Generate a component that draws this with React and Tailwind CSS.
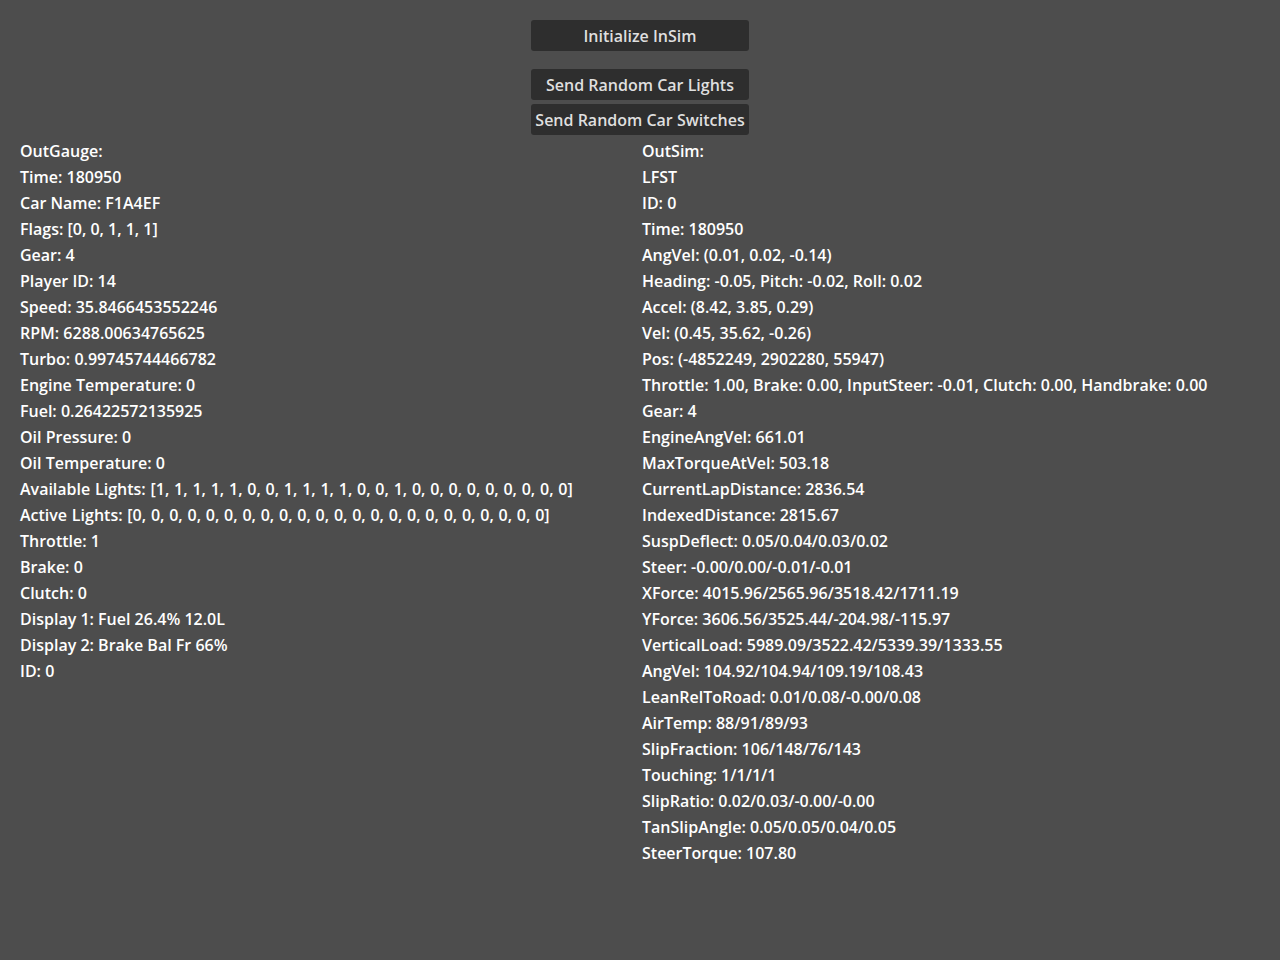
import React from 'react';

const outGauge = [
  'OutGauge:',
  'Time: 180950',
  'Car Name: F1A4EF',
  'Flags: [0, 0, 1, 1, 1]',
  'Gear: 4',
  'Player ID: 14',
  'Speed: 35.8466453552246',
  'RPM: 6288.00634765625',
  'Turbo: 0.99745744466782',
  'Engine Temperature: 0',
  'Fuel: 0.26422572135925',
  'Oil Pressure: 0',
  'Oil Temperature: 0',
  'Available Lights: [1, 1, 1, 1, 1, 0, 0, 1, 1, 1, 1, 0, 0, 1, 0, 0, 0, 0, 0, 0, 0, 0, 0]',
  'Active Lights: [0, 0, 0, 0, 0, 0, 0, 0, 0, 0, 0, 0, 0, 0, 0, 0, 0, 0, 0, 0, 0, 0, 0]',
  'Throttle: 1',
  'Brake: 0',
  'Clutch: 0',
  'Display 1: Fuel 26.4% 12.0L',
  'Display 2: Brake Bal Fr 66%',
  'ID: 0',
];

const outSim = [
  'OutSim:',
  'LFST',
  'ID: 0',
  'Time: 180950',
  'AngVel: (0.01, 0.02, -0.14)',
  'Heading: -0.05, Pitch: -0.02, Roll: 0.02',
  'Accel: (8.42, 3.85, 0.29)',
  'Vel: (0.45, 35.62, -0.26)',
  'Pos: (-4852249, 2902280, 55947)',
  'Throttle: 1.00, Brake: 0.00, InputSteer: -0.01, Clutch: 0.00, Handbrake: 0.00',
  'Gear: 4',
  'EngineAngVel: 661.01',
  'MaxTorqueAtVel: 503.18',
  'CurrentLapDistance: 2836.54',
  'IndexedDistance: 2815.67',
  'SuspDeflect: 0.05/0.04/0.03/0.02',
  'Steer: -0.00/0.00/-0.01/-0.01',
  'XForce: 4015.96/2565.96/3518.42/1711.19',
  'YForce: 3606.56/3525.44/-204.98/-115.97',
  'VerticalLoad: 5989.09/3522.42/5339.39/1333.55',
  'AngVel: 104.92/104.94/109.19/108.43',
  'LeanRelToRoad: 0.01/0.08/-0.00/0.08',
  'AirTemp: 88/91/89/93',
  'SlipFraction: 106/148/76/143',
  'Touching: 1/1/1/1',
  'SlipRatio: 0.02/0.03/-0.00/-0.00',
  'TanSlipAngle: 0.05/0.05/0.04/0.05',
  'SteerTorque: 107.80',
];

function GodotButton({ children }) {
  return (
    <button className="w-[218px] h-[31px] rounded-[3px] bg-[#2e2e2e] text-[#dfdfdf] text-[16px] leading-none">
      {children}
    </button>
  );
}

function Column({ lines }) {
  return (
    <div className="flex flex-col">
      {lines.map((line, i) => (
        <div
          key={i}
          className={
            line.includes('Lights: [')
              ? 'h-[26px] leading-[26px] whitespace-nowrap [word-spacing:0.64px]'
              : 'h-[26px] leading-[26px] whitespace-nowrap'
          }
        >
          {line}
        </div>
      ))}
    </div>
  );
}

export default function App() {
  return (
    <div
      className="w-[1280px] h-[960px] bg-[#4d4d4d] text-white font-semibold text-[16px] overflow-hidden"
      style={{ fontFamily: '"Open Sans", "Noto Sans", sans-serif' }}
    >
      <div className="flex flex-col items-center pt-[20px]">
        <GodotButton>Initialize InSim</GodotButton>
        <div className="h-[18px]" />
        <GodotButton>Send Random Car Lights</GodotButton>
        <div className="h-[4px]" />
        <GodotButton>Send Random Car Switches</GodotButton>
      </div>
      <div className="grid grid-cols-[622px_1fr] px-[20px] pt-[3px]">
        <Column lines={outGauge} />
        <Column lines={outSim} />
      </div>
    </div>
  );
}
